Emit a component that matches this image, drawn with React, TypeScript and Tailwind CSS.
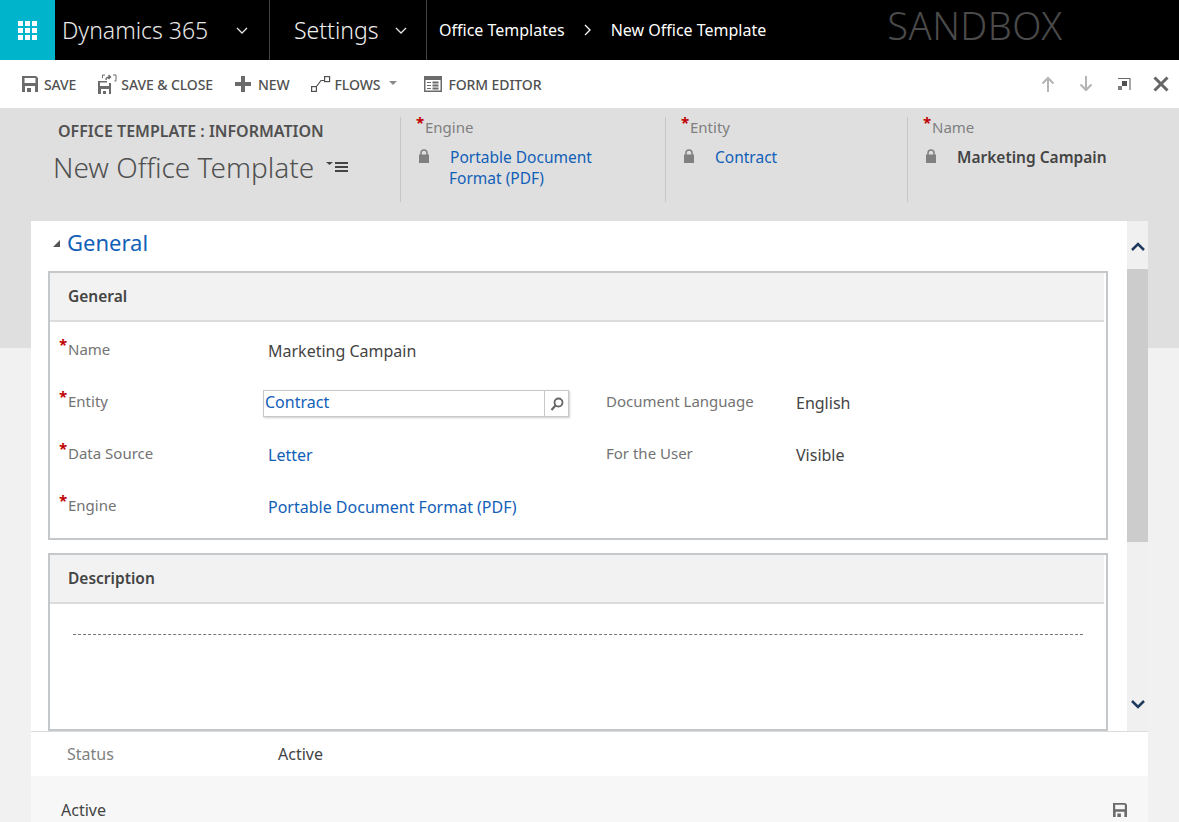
import React from "react";

const blue = "text-[#1160b7]";

function Star() {
	return <span className="absolute left-[-9px] top-[-3px] text-[15px] font-bold leading-[16px] text-[#c00000]">*</span>;
}

function SaveIcon({ className }: { className?: string }) {
	return (
		<svg viewBox="0 0 16 16" className={className}>
			<path fill="#6b6b6b" fillRule="evenodd" d="M0 0h14l2 2v14H0zM2.5 2v5h11V2zM3 10v6h2v-4h4v4h4v-6z" />
		</svg>
	);
}

function SaveCloseIcon() {
	return (
		<svg viewBox="0 0 20 20" className="h-5 w-5">
			<path fill="#6b6b6b" fillRule="evenodd" d="M1 7h9v1.5H3V12h9V9h2v11H1zM4 15v5h2v-3h3v3h3v-5z" />
			<path fill="none" stroke="#6b6b6b" strokeWidth="1" d="M5.5 4V1h2.5M16 1h3v6h-1.5" />
			<path fill="none" stroke="#6b6b6b" strokeWidth="1.4" d="M9 6c0-2 1.5-3 4-3M11.5 1l2 2-2 2" />
		</svg>
	);
}

function PlusIcon() {
	return (
		<svg viewBox="0 0 16 16" className="h-4 w-4">
			<path fill="#6b6b6b" d="M6 0h4v6h6v4h-6v6H6v-6H0V6h6z" />
		</svg>
	);
}

function FlowsIcon() {
	return (
		<svg viewBox="0 0 20 16" className="h-4 w-5">
			<g fill="none" stroke="#505050" strokeWidth="1.2">
				<rect x="0.6" y="10.6" width="4.8" height="4.8" />
				<rect x="13.6" y="0.6" width="5" height="5" />
				<path d="M5.5 10.5L10 4.5h3.5" />
			</g>
		</svg>
	);
}

function FormEditorIcon() {
	return (
		<svg viewBox="0 0 18 16" className="h-4 w-[18px]">
			<path fill="#6b6b6b" fillRule="evenodd" d="M0 0h18v16H0zM1.5 4v10.500h15V4z" />
			<path fill="#6b6b6b" d="M3 6h4v1H3zM3 9h4v1H3zM3 12h4v1H3zM8.500 5.500h6v2h-6zM8.500 8.500h6v2h-6zM8.500 11.500h6v2h-6z" />
		</svg>
	);
}

function Lock() {
	return (
		<svg viewBox="0 0 10 14" className="h-[14px] w-[10px]">
			<path fill="none" stroke="#808080" strokeWidth="1.5" d="M2 6V4a3 3 0 0 1 6 0v2" />
			<rect x="0" y="5.500" width="10" height="8.500" fill="#808080" />
		</svg>
	);
}

function Chevron({ up, className }: { up?: boolean; className?: string }) {
	return (
		<svg viewBox="0 0 14 9" className={className}>
			<path fill="none" stroke="#1e3a5f" strokeWidth="2.500" d={up ? "M1 8l6-6 6 6" : "M1 1l6 6 6-6"} />
		</svg>
	);
}

function NavChevron() {
	return (
		<svg viewBox="0 0 12 7" className="h-[7px] w-3">
			<path fill="none" stroke="#e6e6e6" strokeWidth="1.300" d="M1 1l5 5 5-5" />
		</svg>
	);
}

function ToolButton({ icon, label, className }: { icon: React.ReactNode; label: string; className?: string }) {
	return (
		<div className={`flex items-center ${className ?? ""}`}>
			{icon}
			<span className="text-[14px] font-medium tracking-[-0.1px] text-[#505050]">{label}</span>
		</div>
	);
}

function HeaderField({ label, value, link, className }: { label: string; value: React.ReactNode; link?: boolean; className?: string }) {
	return (
		<div className={`h-[85px] border-l border-[#c4c8ca] pl-[24px] ${className ?? ""}`}>
			<div className="relative text-[15px] leading-[20px] text-[#808080]">
				<Star />
				{label}
			</div>
			<div className="mt-[10px] flex">
				<div className="ml-[-6px] mt-[2px] w-[31px] shrink-0">
					<Lock />
				</div>
				<div className={`text-[15.500px] leading-[21px] ${link ? blue : "font-semibold text-[#444444]"}`}>{value}</div>
			</div>
		</div>
	);
}

function FormLabel({ text, star }: { text: string; star?: boolean }) {
	return (
		<div className="relative text-[15px] leading-[20px] text-[#737373]">
			{star && <Star />}
			{text}
		</div>
	);
}

function SectionHead({ title }: { title: string }) {
	return (
		<div className="mr-[2px] flex h-[49px] items-center border-b-2 border-[#dcdcdc] bg-[#f2f2f2] pl-[18px] text-[15.500px] font-semibold text-[#444444]">
			{title}
		</div>
	);
}

export default function App() {
	return (
		<div className="h-[822px] overflow-hidden bg-[#f1f1f1] font-['Noto_Sans',sans-serif]">
			{/* top nav */}
			<div className="flex h-[60px] bg-black text-white">
				<div className="flex w-[55px] items-center justify-center bg-[#00b4cc]">
					<div className="grid grid-cols-3 gap-[2px]">
						{Array.from({ length: 9 }).map((_, i) => (
							<div key={i} className="h-[5px] w-[5px] bg-white" />
						))}
					</div>
				</div>
				<div className="flex w-[215px] items-center border-r border-[#444444] pl-[7px]">
					<span className="text-[23px] font-light text-[#e8e8e8]">Dynamics 365</span>
					<div className="ml-auto mr-[21px]"><NavChevron /></div>
				</div>
				<div className="flex w-[157px] items-center border-r border-[#444444] pl-[24px]">
					<span className="text-[23px] font-light text-[#f0f0f0]">Settings</span>
					<div className="ml-auto mr-[19px]"><NavChevron /></div>
				</div>
				<div className="flex items-center pl-[12px] text-[16px]">
					<span>Office Templates</span>
					<svg viewBox="0 0 8 12" className="ml-[19px] mr-[19px] h-[12px] w-2">
						<path fill="none" stroke="#ffffff" strokeWidth="1.300" d="M1 1l5 5-5 5" />
					</svg>
					<span>New Office Template</span>
				</div>
				<div className="ml-[121px] flex items-center pb-[10px] text-[38px] font-light tracking-[0.5px] text-[#4a4a4a]">SANDBOX</div>
			</div>

			{/* command bar */}
			<div className="flex h-[48px] items-center bg-white">
				<ToolButton className="ml-[22px] gap-[6px]" icon={<SaveIcon className="h-4 w-4" />} label="SAVE" />
				<ToolButton className="ml-[21px] gap-[4px]" icon={<SaveCloseIcon />} label="SAVE & CLOSE" />
				<ToolButton className="ml-[22px] gap-[7px]" icon={<PlusIcon />} label="NEW" />
				<ToolButton className="ml-[21px] gap-[4px]" icon={<FlowsIcon />} label="FLOWS" />
				<div className="ml-[9px] mt-[-3px] h-0 w-0 border-x-[4px] border-t-[4px] border-x-transparent border-t-[#8a8a8a]" />
				<ToolButton className="ml-[27px] gap-[6px]" icon={<FormEditorIcon />} label="FORM EDITOR" />
				<div className="ml-auto flex items-center">
					<svg viewBox="0 0 14 16" className="h-4 w-[14px]">
						<path fill="none" stroke="#b4b4b4" strokeWidth="2" d="M7 16V2M1.500 7.500L7 2l5.500 5.500" />
					</svg>
					<svg viewBox="0 0 14 16" className="ml-[24px] h-4 w-[14px]">
						<path fill="none" stroke="#b4b4b4" strokeWidth="2" d="M7 0v14M1.500 8.500L7 14l5.500-5.500" />
					</svg>
					<svg viewBox="0 0 14 14" className="ml-[24px] h-[14px] w-[14px]">
						<path fill="none" stroke="#6b6b6b" strokeWidth="1.200" d="M1 1.500h12M13 1v12" />
						<path fill="#505050" d="M5 4h5v5H5z" />
						<path fill="#808080" d="M1 9h4v4H1z" />
					</svg>
					<svg viewBox="0 0 16 16" className="ml-[22px] mr-[10px] h-4 w-4">
						<path fill="none" stroke="#666666" strokeWidth="3" d="M1.500 1.500l13 13M14.500 1.500l-13 13" />
					</svg>
				</div>
			</div>

			{/* record header */}
			<div className="flex h-[240px] bg-[#dfdfdf] pt-[9px]">
				<div className="w-[400px] shrink-0 pl-[53px]">
					<div className="pl-[5px] pt-[3px] text-[16px] font-semibold leading-[22px] text-[#505050]">OFFICE TEMPLATE : INFORMATION</div>
					<div className="mt-[6px] flex items-center">
						<span className="text-[28px] font-light leading-[38px] text-[#505050]">New Office Template</span>
						<svg viewBox="0 0 22 12" className="ml-[12px] h-3 w-[22px]">
							<path fill="#444444" d="M0 1h7L3.500 4zM9 1h13v2H9zM9 5h13v2H9zM9 9h13v2H9z" />
						</svg>
					</div>
				</div>
				<HeaderField className="w-[265px]" label="Engine" link value={<>Portable Document<br /><span className="ml-[-1px]">Format (PDF)</span></>} />
				<HeaderField className="w-[242px]" label="Entity" link value="Contract" />
				<HeaderField className="flex-1" label="Name" value="Marketing Campain" />
			</div>

			{/* form card */}
			<div className="mx-[31px] -mt-[127px] flex h-[601px] flex-col">
				<div className="relative flex h-[510px] bg-white">
					<div className="min-w-0 flex-1">
						<div className="flex h-[50px] items-center pl-[22px] pb-[8px]">
							<div className="mt-[3px] h-0 w-0 border-b-[7px] border-l-[7px] border-b-[#555555] border-l-transparent" />
							<span className="ml-[7px] text-[22px] leading-[28px] text-[#1160b7]">General</span>
						</div>
						<div className="ml-[17px] mr-[19px] h-[269px] border-2 border-[#c4c8ca] border-b-2 border-r-2">
							<SectionHead title="General" />
							<div className="grid grid-cols-[200px_338px_190px_1fr] grid-rows-[52px_52px_52px_52px] pl-[18px] pt-[17px] text-[16px] leading-[22px]">
								<FormLabel star text="Name" />
								<div className="mt-[1px] text-[#444444]">Marketing Campain</div>
								<div />
								<div />
								<FormLabel star text="Entity" />
								<div className="-ml-[5px] -mt-[1px] h-[27px] w-[306px]">
									<div className="flex h-[27px] border border-[#c4c8ca] shadow-[1px_1px_2px_rgba(0,0,0,0.2)]">
										<div className="flex-1 pl-[1px] text-[#1160b7]">Contract</div>
										<div className="flex w-[24px] items-center justify-center border-l border-[#c4c8ca]">
											<svg viewBox="0 0 14 14" className="h-[14px] w-[14px]">
												<circle cx="8.500" cy="5.500" r="4" fill="none" stroke="#666666" strokeWidth="1.800" />
												<path stroke="#666666" strokeWidth="2.200" d="M5.500 8.500L1.500 13" />
											</svg>
										</div>
									</div>
								</div>
								<FormLabel text="Document Language" />
								<div className="mt-[1px] text-[#444444]">English</div>
								<FormLabel star text="Data Source" />
								<div className="mt-[1px] text-[#1160b7]">Letter</div>
								<FormLabel text="For the User" />
								<div className="mt-[1px] text-[#444444]">Visible</div>
								<FormLabel star text="Engine" />
								<div className="mt-[1px] whitespace-nowrap text-[#1160b7]">Portable Document Format (PDF)</div>
							</div>
						</div>
						<div className="ml-[17px] mr-[19px] mt-[13px] h-[178px] border-2 border-[#c4c8ca]">
							<SectionHead title="Description" />
							<div className="mx-[23px] mt-[30px] border-t border-dashed border-[#777777]" />
						</div>
					</div>
					{/* scrollbar */}
					<div className="flex w-[21px] shrink-0 flex-col bg-[#f0f0f0]">
						<div className="flex h-[48px] items-start justify-center pt-[21px]">
							<Chevron up className="h-[9px] w-[14px]" />
						</div>
						<div className="h-[273px] bg-[#cccccc]" />
						<div className="flex flex-1 items-end justify-center pb-[22px]">
							<Chevron className="h-[9px] w-[14px]" />
						</div>
					</div>
				</div>
				<div className="flex h-[45px] items-center border-t border-[#dcdcdc] bg-white pl-[36px] text-[16px]">
					<span className="w-[211px] text-[#808080]">Status</span>
					<span className="text-[#444444]">Active</span>
				</div>
				<div className="flex flex-1 items-center justify-between bg-[#f7f7f7] pl-[30px] pr-[21px] pt-[22px] text-[16px] text-[#444444]">
					<span>Active</span>
					<SaveIcon className="h-[14px] w-[14px]" />
				</div>
			</div>
		</div>
	);
}
